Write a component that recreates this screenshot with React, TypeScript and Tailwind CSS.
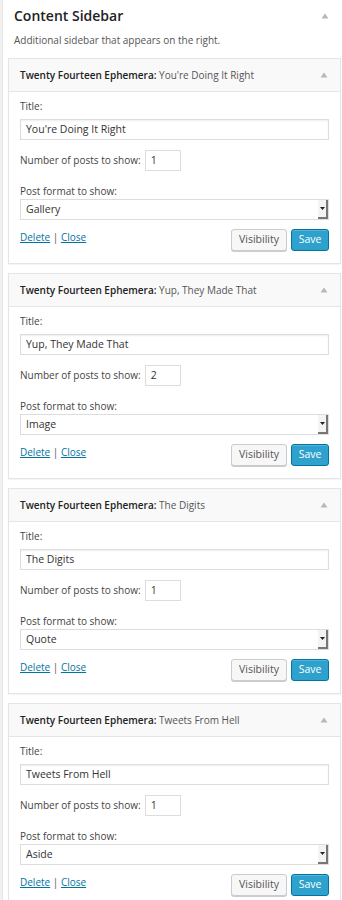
import React from "react";

const widgets = [
  { title: "You're Doing It Right", count: "1", format: "Gallery" },
  { title: "Yup, They Made That", count: "2", format: "Image" },
  { title: "The Digits", count: "1", format: "Quote" },
  { title: "Tweets From Hell", count: "1", format: "Aside" },
];

function Arrow() {
  return (
    <svg width="8" height="6" viewBox="0 0 8 6" className="shrink-0">
      <path d="M4 0.5 L7.5 5.5 L0.5 5.5 Z" fill="#b4b9be" />
    </svg>
  );
}

function Widget({ title, count, format }: { title: string; count: string; format: string }) {
  return (
    <div className="border border-[#e5e5e5] bg-white shadow-[0_1px_1px_rgba(0,0,0,0.04)]">
      <div className="flex h-[33px] items-center justify-between border-b border-[#e5e5e5] bg-[#f9f9f9] pl-[11px] pr-[12px]">
        <div className="text-[10px] text-[#222]">
          <span className="font-semibold">Twenty Fourteen Ephemera:</span>{" "}
          <span className="text-[#555]">{title}</span>
        </div>
        <Arrow />
      </div>
      <div className="px-[11px] pt-[7px] pb-[12px] text-[10px] text-[#444]">
        <div className="h-[14px] leading-[14px]">Title:</div>
        <div className="mt-[6px] flex h-[21px] items-center border border-[#ddd] bg-white px-[5px] text-[10.5px] text-[#333] shadow-[inset_0_1px_2px_rgba(0,0,0,0.07)]">
          {title}
        </div>
        <div className="mt-[10px] flex h-[21px] items-center gap-[4px]">
          <span>Number of posts to show:</span>
          <div className="flex h-[21px] w-[36px] items-center border border-[#ddd] bg-white px-[5px] text-[10.5px] text-[#333]">
            {count}
          </div>
        </div>
        <div className="mt-[13px] h-[14px] leading-[14px]">Post format to show:</div>
        <div className="mt-[1px] flex h-[21px] items-center justify-between border border-[#ddd] bg-white pl-[5px] text-[10.5px] text-[#333]">
          <span>{format}</span>
          <div className="flex h-full w-[10px] items-center justify-center border-r-2 border-b-2 border-[#777] bg-[#f3f3f3]">
            <svg width="5" height="3" viewBox="0 0 5 3">
              <path d="M0 0 L5 0 L2.5 3 Z" fill="#222" />
            </svg>
          </div>
        </div>
        <div className="mt-[9px] flex h-[22px] items-start justify-between">
          <div className="mt-[1px] text-[10px]">
            <a className="text-[#0074a2] underline" href="#">Delete</a>
            <span className="text-[#555]"> | </span>
            <a className="text-[#0074a2] underline" href="#">Close</a>
          </div>
          <div className="flex gap-[4px]">
            <button className="h-[22px] w-[56px] rounded-[3px] border border-[#ccc] bg-[#f7f7f7] text-[10.5px] text-[#555] shadow-[0_1px_0_#ccc]">
              Visibility
            </button>
            <button className="h-[22px] w-[38px] rounded-[3px] border border-[#0074a2] bg-[#2ea2cc] text-[10.5px] text-white shadow-[inset_0_1px_0_rgba(120,200,230,0.5)]">
              Save
            </button>
          </div>
        </div>
      </div>
    </div>
  );
}

export default function App() {
  return (
    <div className="flex min-h-[900px] bg-[#f1f1f1] pl-[2px]" style={{ fontFamily: '"Open Sans", "Noto Sans", sans-serif' }}>
      <div className="flex-1 border-l border-[#e5e5e5] bg-white pl-[5px] pr-[1px]">
        <div className="flex h-[18px] items-center justify-between mt-[7px] pl-[6px] pr-[12px]">
          <h3 className="text-[14px] font-semibold leading-[18px] text-[#222]">Content Sidebar</h3>
          <Arrow />
        </div>
        <p className="mt-[8px] h-[14px] pl-[6px] text-[10px] leading-[14px] text-[#555]">Additional sidebar that appears on the right.</p>
        <div className="mt-[11px] flex flex-col gap-[9px]">
          {widgets.map((w) => (
            <Widget key={w.title} {...w} />
          ))}
        </div>
      </div>
    </div>
  );
}
